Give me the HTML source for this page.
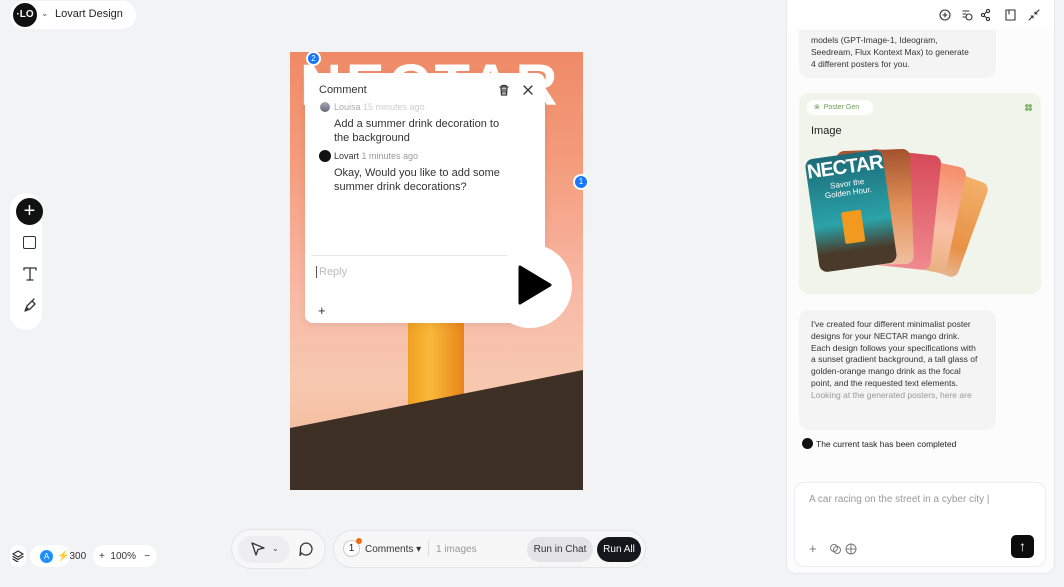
<!DOCTYPE html>
<html><head><meta charset="utf-8"><style>
*{box-sizing:border-box;margin:0;padding:0}
body{width:1064px;height:587px;background:#f2f3f5;font-family:"Liberation Sans",sans-serif;position:relative;overflow:hidden;color:#222}
.abs{position:absolute}
.pill{background:#fff;border-radius:20px}
.ic{stroke:#333;fill:none;stroke-width:1.3;stroke-linecap:round;stroke-linejoin:round}
</style></head><body>
<!-- top left -->
<div class="abs pill" style="left:10px;top:1px;width:126px;height:28px;border-radius:14px"></div>
<div class="abs" style="left:13px;top:3px;width:24px;height:24px;border-radius:50%;background:#111;color:#fff;font-size:10px;font-weight:bold;text-align:center;line-height:24px">·LO</div>
<div class="abs" style="left:41px;top:8px;font-size:9px;color:#555">⌄</div>
<div class="abs" style="left:55px;top:8px;font-size:11px;color:#222">Lovart Design</div>

<!-- left toolbar -->
<div class="abs" style="left:10px;top:193px;width:32px;height:137px;background:#fff;border-radius:16px"></div>
<div class="abs" style="left:16px;top:198px;width:27px;height:27px;border-radius:50%;background:#111;color:#fff;text-align:center;line-height:26px;font-size:20px">+</div>
<div class="abs" style="left:23px;top:236px;width:13px;height:13px;border:1.3px solid #333;border-radius:2px"></div>
<svg class="abs" style="left:22px;top:266px" width="16" height="16"><path class="ic" d="M2 2H14M8 2V14M5 14H11M2 2V4M14 2V4"/></svg>
<svg class="abs" style="left:22px;top:298px" width="16" height="16"><path class="ic" d="M3 13L5 8L10 3L13 6L8 11ZM3 13L6 10M10 3L12 1"/></svg>

<!-- poster -->
<div class="abs" style="left:290px;top:52px;width:293px;height:438px;overflow:hidden;background:linear-gradient(180deg,#ef8a67 0%,#f49c7c 25%,#f8b9a6 55%,#f7c8b0 75%,#f0b490 100%)">
  <div class="abs" style="left:10px;top:0px;font-size:58px;font-weight:bold;color:#fff;letter-spacing:4px">NECTAR</div>
  <div class="abs" style="left:118px;top:260px;width:56px;height:100px;background:linear-gradient(90deg,#f0a020,#f9b83a 40%,#e8851a);border-radius:0 0 4px 4px"></div>
  <svg class="abs" style="left:0;top:0" width="293" height="438"><polygon points="0,376 293,318 293,438 0,438" fill="#3e3024"/></svg>
</div>

<!-- comment popup -->
<div class="abs" style="left:305px;top:73px;width:240px;height:250px;background:#fff;border-radius:8px;box-shadow:0 2px 8px rgba(0,0,0,.08)"></div>
<div class="abs" style="left:488px;top:244px;width:84px;height:84px;border-radius:50%;background:#fff"></div>
<svg class="abs" style="left:517px;top:265px" width="36" height="40"><path d="M3 2L33 20L3 38Z" fill="#000" stroke="#000" stroke-width="3" stroke-linejoin="round"/></svg>
<div class="abs" style="left:319px;top:84px;font-size:11px;color:#333">Comment</div>
<svg class="abs" style="left:498px;top:84px" width="12" height="12"><path class="ic" d="M2 3H10M4 3V1.5H8V3M3 3L3.5 11H8.5L9 3M5 5V9M7 5V9"/></svg>
<svg class="abs" style="left:522px;top:84px" width="12" height="12"><path class="ic" d="M2 2L10 10M10 2L2 10"/></svg>
<div class="abs" style="left:320px;top:102px;width:10px;height:10px;border-radius:50%;background:linear-gradient(#aab,#667)"></div>
<div class="abs" style="left:334px;top:102px;font-size:9px;color:#aaa">Louisa <span style="color:#ccc">15 minutes ago</span></div>
<div class="abs" style="left:334px;top:117px;font-size:11px;color:#333;line-height:14px;width:180px">Add a summer drink decoration to the background</div>
<div class="abs" style="left:319px;top:150px;width:12px;height:12px;border-radius:50%;background:#111"></div>
<div class="abs" style="left:334px;top:151px;font-size:9px;color:#333">Lovart <span style="color:#999">1 minutes ago</span></div>
<div class="abs" style="left:334px;top:166px;font-size:11px;color:#333;line-height:14px;width:180px">Okay, Would you like to add some summer drink decorations?</div>
<div class="abs" style="left:311px;top:255px;width:196px;height:1px;background:#e6e6e6"></div>
<div class="abs" style="left:316px;top:266px;font-size:11px;color:#bbb;border-left:1px solid #555;padding-left:2px">Reply</div>
<div class="abs" style="left:318px;top:303px;font-size:13px;color:#333">+</div>

<div class="abs" style="left:306px;top:51px;width:15px;height:15px;border-radius:50%;background:#1677ff;border:2px solid #fff;color:#fff;font-size:8px;text-align:center;line-height:11px">2</div>
<div class="abs" style="left:573px;top:174px;width:16px;height:16px;border-radius:50%;background:#1677ff;border:2px solid #fff;color:#fff;font-size:8px;text-align:center;line-height:12px">1</div>

<!-- bottom left -->
<div class="abs pill" style="left:10px;top:545px;width:16px;height:22px;border-radius:8px"></div>
<svg class="abs" style="left:12px;top:550px" width="12" height="12"><path class="ic" d="M6 1L11 4L6 7L1 4ZM1 6.5L6 9.5L11 6.5M1 9L6 12"/></svg>
<div class="abs pill" style="left:30px;top:545px;width:40px;height:22px"></div>
<div class="abs" style="left:40px;top:550px;width:13px;height:13px;border-radius:50%;background:#1e90ff;color:#fff;font-size:8px;text-align:center;line-height:13px">A</div>
<div class="abs" style="left:57px;top:551px;font-size:10px;color:#333;white-space:nowrap">⚡300</div>
<div class="abs pill" style="left:93px;top:545px;width:64px;height:22px"></div>
<div class="abs" style="left:99px;top:551px;font-size:10px;color:#333;white-space:nowrap">+ &nbsp;100% &nbsp; −</div>

<!-- bottom center -->
<div class="abs" style="left:231px;top:529px;width:95px;height:40px;border-radius:20px;background:#f7f7f8;border:1px solid #e4e4e6"></div>
<div class="abs" style="left:238px;top:536px;width:52px;height:27px;border-radius:14px;background:#eeeef0"></div>
<svg class="abs" style="left:250px;top:541px" width="16" height="16"><path class="ic" d="M2 2L14 7L8 8.5L6 14Z"/></svg>
<div class="abs" style="left:272px;top:544px;font-size:8px;color:#444">⌄</div>
<svg class="abs" style="left:298px;top:541px" width="16" height="16"><path class="ic" d="M8 2A6 6 0 1 1 3.5 12L2 14.5L2.5 9A6 6 0 0 1 8 2Z"/></svg>
<div class="abs" style="left:333px;top:530px;width:313px;height:38px;border-radius:19px;background:#f7f7f8;border:1px solid #e4e4e6"></div>
<div class="abs" style="left:343px;top:540px;width:17px;height:17px;border-radius:50%;background:#fff;border:1px solid #ccc;font-size:10px;text-align:center;line-height:15px">1</div>
<div class="abs" style="left:356px;top:538px;width:6px;height:6px;border-radius:50%;background:#f36e10"></div>
<div class="abs" style="left:365px;top:544px;font-size:10px;color:#333">Comments ▾</div>
<div class="abs" style="left:428px;top:541px;width:1px;height:15px;background:#ddd"></div>
<div class="abs" style="left:436px;top:544px;font-size:10px;color:#999">1 images</div>
<div class="abs" style="left:527px;top:537px;width:66px;height:25px;border-radius:13px;background:#e4e4e6;font-size:10px;color:#333;text-align:center;line-height:25px">Run in Chat</div>
<div class="abs" style="left:597px;top:537px;width:44px;height:25px;border-radius:13px;background:#14171c;font-size:10px;color:#fff;text-align:center;line-height:25px">Run All</div>

<!-- right panel -->
<div class="abs" style="left:786px;top:0;width:269px;height:574px;background:#fcfcfc;border:1px solid #e8e8ea;border-top:none;border-radius:0 0 10px 10px"></div>
<div class="abs" style="left:799px;top:28px;width:197px;height:50px;background:#f4f4f5;border-radius:0 0 10px 10px"></div>
<div class="abs" style="left:811px;top:34px;font-size:8.5px;color:#333;line-height:12px">models (GPT-Image-1, Ideogram,<br>Seedream, Flux Kontext Max) to generate<br>4 different posters for you.</div>
<div class="abs" style="left:787px;top:0;width:267px;height:30px;background:linear-gradient(#fff,rgba(255,255,255,.85))"></div>
<svg class="abs" style="left:938px;top:8px" width="104" height="14"><g class="ic" style="stroke-width:1.1"><circle cx="7" cy="7" r="5"/><path d="M7 5V9M5 7H9"/><path d="M25 3H31M25 6H28M25 9H28"/><circle cx="31" cy="9" r="3"/><circle cx="45" cy="7" r="1.6"/><circle cx="50" cy="3" r="1.6"/><circle cx="50" cy="11" r="1.6"/><path d="M46.5 6L48.5 4M46.5 8L48.5 10"/><path d="M68 2H77V12H68ZM71 2V6"/><path d="M91 12L95 8M93 8H95V10M101 2L97 6M97 4V6H99"/></g></svg>

<div class="abs" style="left:799px;top:93px;width:242px;height:201px;background:#f1f4eb;border-radius:10px"></div>
<div class="abs" style="left:807px;top:100px;width:66px;height:15px;border-radius:8px;background:#fff;font-size:7px;color:#6e9b55;line-height:15px;padding-left:7px">⊗ &nbsp;Poster Gen</div>
<div class="abs" style="left:1025px;top:104px;width:7px;height:7px;background:radial-gradient(circle,#8ab873 1.5px,transparent 2px) 0 0/3.5px 3.5px"></div>
<div class="abs" style="left:811px;top:125px;font-size:11px;color:#222">Image</div>
<div class="abs" style="left:905px;top:170px;width:70px;height:100px;border-radius:8px;background:linear-gradient(#f2b06a,#e89145 70%,#e7b590);transform:rotate(20deg)"></div>
<div class="abs" style="left:885px;top:160px;width:72px;height:108px;border-radius:8px;background:linear-gradient(#f68d6a,#f9c0a8 60%,#e9b080);transform:rotate(12deg)"></div>
<div class="abs" style="left:862px;top:152px;width:74px;height:115px;border-radius:8px;background:linear-gradient(#d84a5a,#f08a90);transform:rotate(6deg)"></div>
<div class="abs" style="left:838px;top:150px;width:74px;height:115px;border-radius:8px;background:linear-gradient(#a4522e,#e29158 50%,#efbfa0);transform:rotate(-2deg)"></div>
<div class="abs" style="left:812px;top:154px;width:78px;height:114px;border-radius:8px;background:linear-gradient(#1d6b78,#2aa3a8 60%,#4a3a2a 85%);transform:rotate(-8deg);color:#fff;text-align:center;overflow:hidden">
 <div style="font-size:20px;font-weight:bold;margin-top:2px;letter-spacing:-1px">NECTAR</div><div style="font-size:8px;line-height:9px">Savor the<br>Golden Hour.</div>
 <div style="width:20px;height:32px;margin:14px auto 0;background:#f29a20;border-radius:2px"></div></div>

<div class="abs" style="left:799px;top:310px;width:197px;height:120px;background:#f4f4f5;border-radius:10px"></div>
<div class="abs" style="left:811px;top:319px;font-size:8.5px;color:#333;line-height:11.8px;width:170px">I've created four different minimalist poster designs for your NECTAR mango drink. Each design follows your specifications with a sunset gradient background, a tall glass of golden-orange mango drink as the focal point, and the requested text elements.<br><span style="color:#999">Looking at the generated posters, here are</span></div>
<div class="abs" style="left:802px;top:438px;width:11px;height:11px;border-radius:50%;background:#111"></div>
<div class="abs" style="left:816px;top:439px;font-size:8.5px;color:#222">The current task has been completed</div>

<div class="abs" style="left:794px;top:482px;width:252px;height:85px;background:#fff;border:1px solid #ececee;border-radius:10px"></div>
<div class="abs" style="left:809px;top:494px;font-size:10px;color:#999">A car racing on the street in a cyber city |</div>
<div class="abs" style="left:809px;top:541px;font-size:13px;color:#777">+</div>
<svg class="abs" style="left:829px;top:543px" width="28" height="12"><g class="ic" style="stroke:#777;stroke-width:1"><circle cx="5" cy="5" r="3.5"/><circle cx="8" cy="7" r="3.5"/><circle cx="22" cy="6" r="5"/><path d="M17 6H27M22 1V11"/></g></svg>
<div class="abs" style="left:1011px;top:535px;width:23px;height:23px;border-radius:5px;background:#0c0c0c;color:#fff;text-align:center;font-size:14px;line-height:23px">↑</div>
</body></html>
